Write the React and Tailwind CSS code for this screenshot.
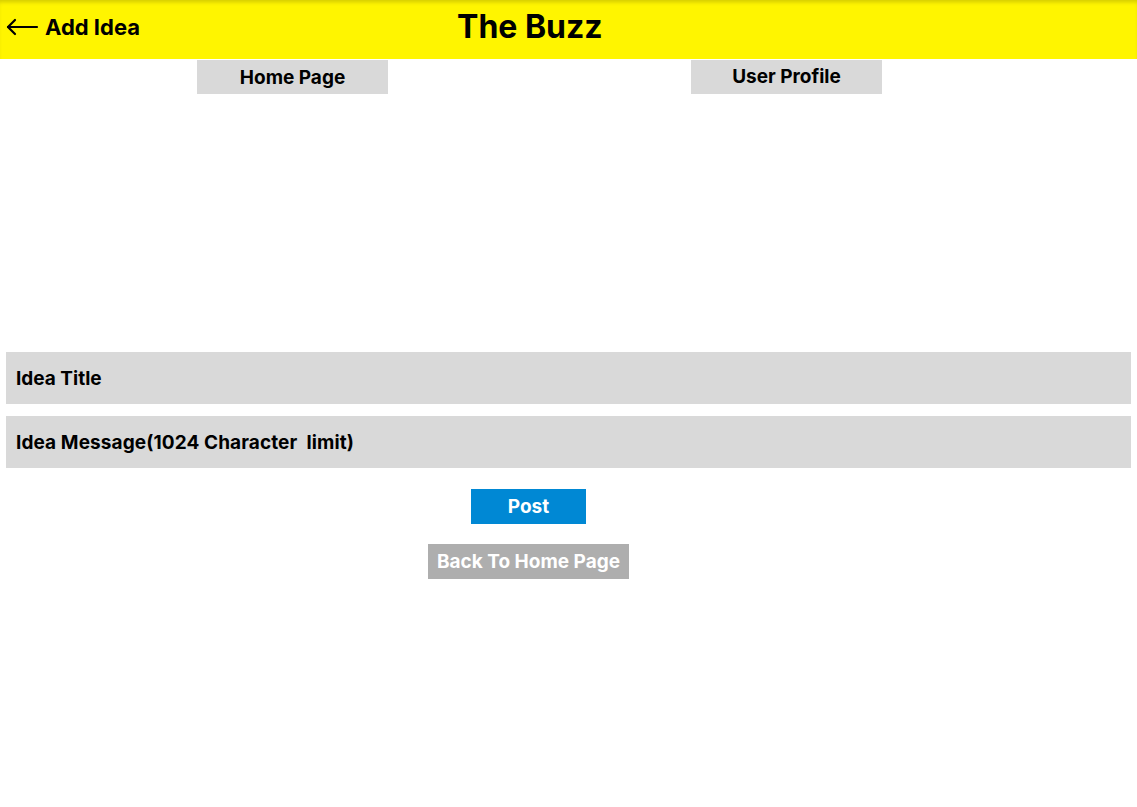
import React from 'react';

const App = () => {
  return (
    <div className="min-h-[807px] bg-white font-['Inter','Liberation_Sans',sans-serif] font-bold text-black">
      {/* Header */}
      <header className="flex h-[59px] items-center bg-[#fff500] pb-[5px] pl-[6px] shadow-[inset_0_4px_4px_-2px_rgba(0,0,0,0.18)]">
        <svg width="33" height="18" viewBox="0 0 33 18" fill="none" stroke="black" strokeWidth="2.2" strokeLinecap="round" strokeLinejoin="round">
          <path d="M31 9H2" />
          <path d="M9 2L2 9l7 7" />
        </svg>
        <span className="ml-[6px] text-[22px] leading-none">Add Idea</span>
        <h1 className="ml-[317px] text-[32px] leading-none">The Buzz</h1>
      </header>

      {/* Nav */}
      <nav className="flex gap-[303px] pl-[197px] pt-px">
        <button className="h-[34px] w-[191px] bg-[#d9d9d9] text-[19px] leading-none">Home Page</button>
        <button className="h-[34px] w-[191px] bg-[#d9d9d9] pb-[2px] text-[19px] leading-none">User Profile</button>
      </nav>

      {/* Form */}
      <div className="mt-[258px] flex flex-col gap-3 px-[6px]">
        <div className="flex h-[52px] items-center bg-[#d9d9d9] pl-[10px] pt-[2px] text-[19px]">Idea Title</div>
        <div className="flex h-[52px] items-center bg-[#d9d9d9] pl-[10px] pt-[2px] text-[19px] tracking-[0.1px] whitespace-pre">
          Idea Message(1024 Character  limit)
        </div>
      </div>

      <div className="mt-[21px] flex flex-col items-center gap-5 pr-[80px]">
        <button className="h-[35px] w-[115px] bg-[#0088d4] pt-[2px] text-[19px] text-white">Post</button>
        <button className="h-[35px] w-[201px] bg-[#aeaeae] pt-[2px] text-[19px] text-white">Back To Home Page</button>
      </div>
    </div>
  );
};

export default App;
